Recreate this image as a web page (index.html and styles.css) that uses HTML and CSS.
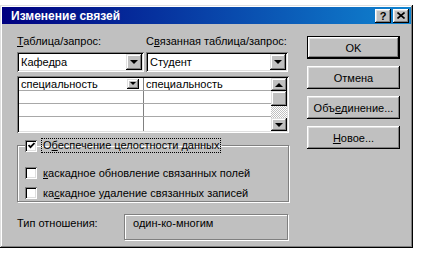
FILE: index.html
```html
<!DOCTYPE html>
<html lang="ru">

<head>
    <meta charset="UTF-8">
    <title>Изменение связей</title>
    <link rel="stylesheet" href="styles.css">
</head>

<body>
    <div class="window">
        <div class="titlebar">
            <span class="title">Изменение связей</span>
            <div class="title-btns">
                <span class="tbtn">?</span>
                <span class="tbtn">
                    <svg width="8" height="7" viewBox="0 0 8 7">
                        <path d="M0.5 0.5 L7.5 6.5 M7.5 0.5 L0.5 6.5" stroke="#000" stroke-width="1.6" />
                    </svg>
                </span>
            </div>
        </div>

        <div class="content">
            <div class="left">
                <div class="pair labels">
                    <span><u>Т</u>аблица/запрос:</span>
                    <span>С<u>в</u>язанная таблица/запрос:</span>
                </div>
                <div class="pair combos">
                    <div class="combo"><span>Кафедра</span><i class="drop"></i></div>
                    <div class="combo"><span>Студент</span><i class="drop"></i></div>
                </div>

                <div class="fields">
                    <div class="cells">
                        <div class="row">
                            <div class="cell">специальность<i class="drop mini"></i></div>
                            <div class="cell">специальность</div>
                        </div>
                        <div class="row">
                            <div class="cell"></div>
                            <div class="cell"></div>
                        </div>
                        <div class="row">
                            <div class="cell"></div>
                            <div class="cell"></div>
                        </div>
                        <div class="row last">
                            <div class="cell"></div>
                            <div class="cell"></div>
                        </div>
                    </div>
                    <div class="scroll">
                        <i class="sbtn up"></i>
                        <i class="thumb"></i>
                        <i class="track"></i>
                        <i class="sbtn down"></i>
                    </div>
                </div>

                <fieldset class="group">
                    <legend>
                        <span class="check on"><svg width="7" height="7" viewBox="0 0 7 7"><path d="M0.5 3 L2.5 5.2 L6.5 1" stroke="#000" stroke-width="1.8" fill="none" /></svg></span>
                        <span class="focus">О<u>б</u>еспечение целостности данных</span>
                    </legend>
                    <div class="opt first"><span class="check"></span><span><u>к</u>аскадное обновление связанных полей</span></div>
                    <div class="opt"><span class="check"></span><span>ка<u>с</u>кадное удаление связанных записей</span></div>
                </fieldset>

                <div class="relation">
                    <span class="rel-label">Тип отношения:</span>
                    <div class="rel-box">один-ко-многим</div>
                </div>
            </div>

            <div class="buttons">
                <div class="btn default">OK</div>
                <div class="btn">Отмена</div>
                <div class="btn">Объ<u>е</u>динение...</div>
                <div class="btn"><u>Н</u>овое...</div>
            </div>
        </div>
    </div>
</body>

</html>
```

FILE: styles.css
```css
* {
    margin: 0;
    padding: 0;
    box-sizing: border-box;
}

body {
    background-color: #fff;
    font-family: "Liberation Sans", Arial, sans-serif;
    font-size: 11px;
    color: #000;
}

u {
    text-decoration: underline;
    text-underline-offset: 1px;
}

.window {
    width: 413px;
    height: 243px;
    margin-top: 5px;
    padding: 2px;
    background-color: #c0c0c0;
    box-shadow: inset -1px -1px #000, inset 1px 1px #dfdfdf, inset -2px -2px #808080, inset 2px 2px #fff;
}

.titlebar {
    display: flex;
    align-items: center;
    justify-content: space-between;
    height: 17px;
    padding: 0 2px 0 9px;
    background: linear-gradient(90deg, #000080, #1084d0);
}

.title {
    color: #fff;
    font-weight: bold;
    font-size: 12px;
}

.title-btns {
    display: flex;
    gap: 2px;
}

.tbtn {
    display: flex;
    align-items: center;
    justify-content: center;
    width: 16px;
    height: 14px;
    background-color: #c0c0c0;
    font-weight: bold;
    font-size: 11px;
    box-shadow: inset -1px -1px #000, inset 1px 1px #fff, inset -2px -2px #808080, inset 2px 2px #dfdfdf;
}

.content {
    display: flex;
    gap: 18px;
    padding: 11px 0 0 15px;
}

.left {
    width: 272px;
}

.pair {
    display: grid;
    grid-template-columns: 127px 142px;
    gap: 2px;
}

.labels {
    line-height: 13px;
}

.combos {
    margin-top: 4px;
}

.combo {
    display: flex;
    align-items: center;
    justify-content: space-between;
    height: 20px;
    padding: 2px;
    background-color: #fff;
    box-shadow: inset 1px 1px #808080, inset -1px -1px #fff, inset 2px 2px #000, inset -2px -2px #dfdfdf;
}

.combo span {
    padding-left: 2px;
}

.drop {
    position: relative;
    display: block;
    width: 16px;
    height: 16px;
    background-color: #c0c0c0;
    box-shadow: inset -1px -1px #000, inset 1px 1px #dfdfdf, inset -2px -2px #808080, inset 2px 2px #fff;
}

/* small black triangles */
.drop::after,
.sbtn::after {
    content: "";
    position: absolute;
    left: 50%;
    top: 50%;
    margin-left: -4px;
    margin-top: -2px;
    border-left: 4px solid transparent;
    border-right: 4px solid transparent;
    border-top: 4px solid #000;
}

.fields {
    display: flex;
    height: 57px;
    margin-top: 4px;
    padding: 2px;
    background-color: #fff;
    box-shadow: inset 1px 1px #808080, inset -1px -1px #fff, inset 2px 2px #000, inset -2px -2px #dfdfdf;
}

.cells {
    flex: 1;
}

.row {
    display: grid;
    grid-template-columns: 125px 1fr;
    height: 13px;
    border-bottom: 1px solid #a8a8a8;
}

.row.last {
    height: 14px;
    border-bottom: none;
}

.cell {
    display: flex;
    align-items: center;
    justify-content: space-between;
    padding: 0 2px 0 2px;
    line-height: 12px;
}

.cell:first-child {
    border-right: 1px solid #808080;
}

.drop.mini {
    width: 12px;
    height: 10px;
    margin-right: 2px;
}

.drop.mini::after {
    margin-left: -3px;
    border-left-width: 3px;
    border-right-width: 3px;
    border-top-width: 3px;
}

.scroll {
    display: flex;
    flex-direction: column;
    width: 16px;
}

.sbtn {
    position: relative;
    display: block;
    height: 13px;
    background-color: #c0c0c0;
    box-shadow: inset -1px -1px #000, inset 1px 1px #dfdfdf, inset -2px -2px #808080, inset 2px 2px #fff;
}

.sbtn.up::after {
    border-top: none;
    border-bottom: 4px solid #000;
}

.thumb {
    display: block;
    height: 15px;
    background-color: #c0c0c0;
    box-shadow: inset -1px -1px #000, inset 1px 1px #dfdfdf, inset -2px -2px #808080, inset 2px 2px #fff;
}

.track {
    display: block;
    height: 12px;
    background: repeating-conic-gradient(#c0c0c0 0 25%, #fff 0 50%) 0 0 / 2px 2px;
}

.group {
    margin-top: 6px;
    padding: 0 0 2px 7px;
    border: 1px solid #808080;
    box-shadow: 1px 1px #fff, inset 1px 1px #fff;
}

.group legend {
    display: flex;
    align-items: center;
    gap: 5px;
    margin-left: 0;
    padding: 0 2px 0 0;
    line-height: 13px;
}

.check {
    display: flex;
    align-items: center;
    justify-content: center;
    width: 12px;
    height: 12px;
    background-color: #fff;
    box-shadow: inset 1px 1px #808080, inset -1px -1px #fff, inset 2px 2px #000, inset -2px -2px #dfdfdf;
}

.focus {
    padding: 0 1px;
    outline: 1px dotted #000;
    outline-offset: 0;
}

.opt {
    display: flex;
    align-items: center;
    gap: 6px;
    height: 13px;
    margin-top: 7px;
}

.opt.first {
    margin-top: 14px;
}

.relation {
    display: flex;
    align-items: flex-start;
    margin-top: 12px;
}

.rel-label {
    width: 107px;
    margin-top: 3px;
    line-height: 13px;
}

.rel-box {
    width: 164px;
    height: 26px;
    padding: 2px 0 0 8px;
    line-height: 13px;
    border: 1px solid #808080;
    box-shadow: 1px 1px #fff, inset 1px 1px #fff;
}

.buttons {
    display: flex;
    flex-direction: column;
    gap: 7px;
    width: 93px;
    margin-top: 1px;
}

.btn {
    display: flex;
    align-items: center;
    justify-content: center;
    height: 23px;
    box-shadow: inset -1px -1px #000, inset 1px 1px #fff, inset -2px -2px #808080, inset 2px 2px #dfdfdf;
}

.btn.default {
    border: 1px solid #000;
    box-shadow: inset -1px -1px #000, inset 1px 1px #fff, inset -2px -2px #808080, inset 2px 2px #dfdfdf;
}
```
